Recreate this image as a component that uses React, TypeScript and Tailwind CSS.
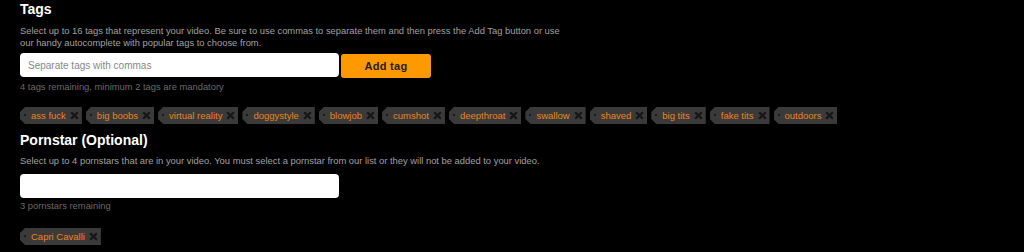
import React from 'react'

const tags = [
  'ass fuck',
  'big boobs',
  'virtual reality',
  'doggystyle',
  'blowjob',
  'cumshot',
  'deepthroat',
  'swallow',
  'shaved',
  'big tits',
  'fake tits',
  'outdoors',
]

function Tag({ label }: { label: string }) {
  return (
    <div className="relative flex h-[17px] items-center bg-[#3a3a3a] pl-[11px] pr-[3px] [clip-path:polygon(5px_0,100%_0,100%_100%,5px_100%,0_calc(100%-5px),0_5px)]">
      {/* hole in the tag */}
      <span className="absolute left-[4px] top-[7px] h-[2px] w-[2px] rounded-full bg-[#111]" />
      <span className="text-[9.5px] leading-none text-[#ea841c]">{label}</span>
      <svg className="ml-[4px]" width="9" height="9" viewBox="0 0 9 9">
        <path d="M1.2 1.2 L7.8 7.8 M7.8 1.2 L1.2 7.8" stroke="#161616" strokeWidth="2.3" />
      </svg>
    </div>
  )
}

export default function App() {
  return (
    <div className="h-[252px] w-[1024px] overflow-hidden bg-black pl-[20px] font-['Liberation_Sans',Arial,sans-serif]">
      {/* Tags */}
      <h2 className="pt-[1px] text-[14px] font-bold leading-[16px] text-white">Tags</h2>
      <p className="mt-[8px] w-[550px] text-[9.4px] leading-[12px] text-[#a0a0a0]">
        Select up to 16 tags that represent your video. Be sure to use commas to separate them and then press the Add Tag button or use our handy autocomplete with popular tags to choose from.
      </p>
      <div className="mt-[4px] flex items-start gap-[2px]">
        <div className="flex h-[24px] w-[319px] items-center rounded-[4px] bg-white pl-[8px] text-[10px] text-[#888]">
          Separate tags with commas
        </div>
        <button className="mt-[1px] h-[24px] w-[90px] rounded-[3px] bg-[#ff9900] text-[11px] font-bold tracking-[0.3px] text-[#222]">
          Add tag
        </button>
      </div>
      <p className="mt-[3px] text-[9.4px] leading-[12px] text-[#6a6a6a]">4 tags remaining, minimum 2 tags are mandatory</p>
      <div className="mt-[14px] flex gap-[4px]">
        {tags.map((t) => (
          <Tag key={t} label={t} />
        ))}
      </div>

      {/* Pornstar */}
      <h2 className="mt-[8px] text-[14px] font-bold leading-[16px] text-white">Pornstar (Optional)</h2>
      <p className="mt-[7px] text-[9.4px] leading-[12px] text-[#a0a0a0]">
        Select up to 4 pornstars that are in your video. You must select a pornstar from our list or they will not be added to your video.
      </p>
      <div className="mt-[7px] h-[24px] w-[319px] rounded-[4px] bg-white" />
      <p className="mt-[2px] text-[9.4px] leading-[12px] text-[#6a6a6a]">3 pornstars remaining</p>
      <div className="mt-[16px] flex">
        <Tag label="Capri Cavalli" />
      </div>
    </div>
  )
}
